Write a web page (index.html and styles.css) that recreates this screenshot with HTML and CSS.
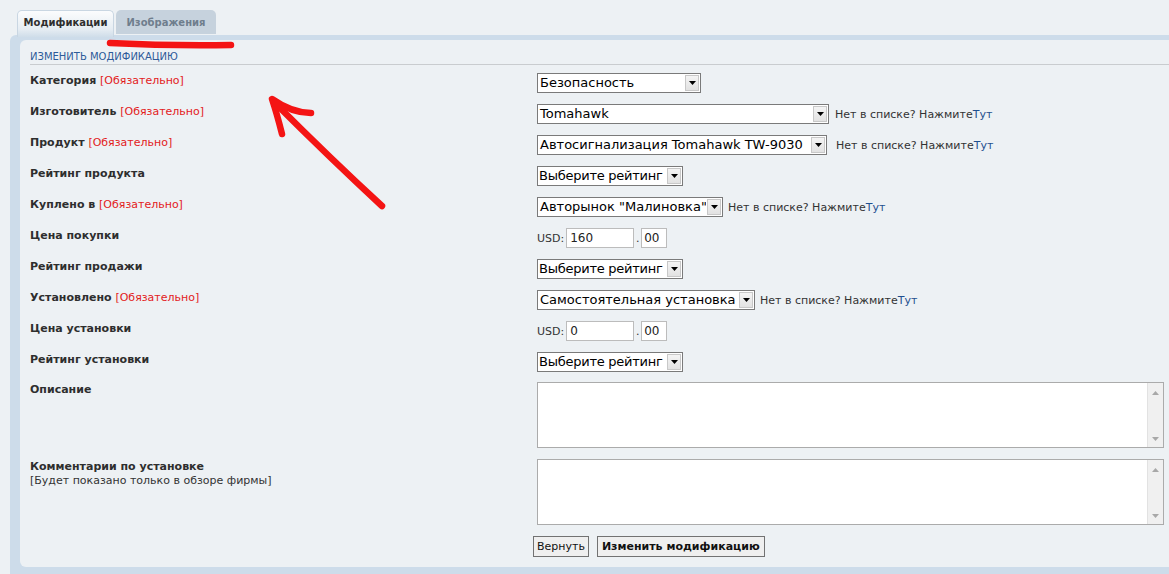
FILE: index.html
```html
<!DOCTYPE html>
<html lang="ru">
<head>
<meta charset="utf-8">
<title>Изменить модификацию</title>
<link rel="stylesheet" href="styles.css">
</head>
<body>
<div class="page">
  <div class="tabs">
    <div class="tab active">Модификации</div>
    <div class="tab">Изображения</div>
  </div>
  <div class="frame">
    <div class="panel">
      <div class="head">ИЗМЕНИТЬ МОДИФИКАЦИЮ</div>

      <div class="row">
        <div class="lbl">Категория <span class="req">[Обязательно]</span></div>
        <div class="ctl">
          <div class="sel w164"><span class="sel-text">Безопасность</span><span class="sel-btn"><svg width="7" height="4" viewBox="0 0 7 4"><path d="M0 0H7L3.5 4Z" fill="#000"/></svg></span></div>
        </div>
      </div>

      <div class="row">
        <div class="lbl">Изготовитель <span class="req">[Обязательно]</span></div>
        <div class="ctl">
          <div class="sel w292"><span class="sel-text">Tomahawk</span><span class="sel-btn"><svg width="7" height="4" viewBox="0 0 7 4"><path d="M0 0H7L3.5 4Z" fill="#000"/></svg></span></div>
          <span class="hint">Нет в списке? Нажмите<a class="link">Тут</a></span>
        </div>
      </div>

      <div class="row">
        <div class="lbl">Продукт <span class="req">[Обязательно]</span></div>
        <div class="ctl gap9">
          <div class="sel w290"><span class="sel-text">Автосигнализация Tomahawk TW-9030</span><span class="sel-btn"><svg width="7" height="4" viewBox="0 0 7 4"><path d="M0 0H7L3.5 4Z" fill="#000"/></svg></span></div>
          <span class="hint">Нет в списке? Нажмите<a class="link">Тут</a></span>
        </div>
      </div>

      <div class="row">
        <div class="lbl">Рейтинг продукта</div>
        <div class="ctl">
          <div class="sel w146"><span class="sel-text">Выберите рейтинг</span><span class="sel-btn"><svg width="7" height="4" viewBox="0 0 7 4"><path d="M0 0H7L3.5 4Z" fill="#000"/></svg></span></div>
        </div>
      </div>

      <div class="row">
        <div class="lbl">Куплено в <span class="req">[Обязательно]</span></div>
        <div class="ctl gap5">
          <div class="sel w186"><span class="sel-text">Авторынок "Малиновка"</span><span class="sel-btn"><svg width="7" height="4" viewBox="0 0 7 4"><path d="M0 0H7L3.5 4Z" fill="#000"/></svg></span></div>
          <span class="hint">Нет в списке? Нажмите<a class="link">Тут</a></span>
        </div>
      </div>

      <div class="row">
        <div class="lbl">Цена покупки</div>
        <div class="ctl gap0">
          <span class="cur">USD:</span><input class="money" type="text" value="160"><span class="dot">.</span><input class="cents" type="text" value="00">
        </div>
      </div>

      <div class="row">
        <div class="lbl">Рейтинг продажи</div>
        <div class="ctl">
          <div class="sel w146"><span class="sel-text">Выберите рейтинг</span><span class="sel-btn"><svg width="7" height="4" viewBox="0 0 7 4"><path d="M0 0H7L3.5 4Z" fill="#000"/></svg></span></div>
        </div>
      </div>

      <div class="row">
        <div class="lbl">Установлено <span class="req">[Обязательно]</span></div>
        <div class="ctl gap5">
          <div class="sel w218"><span class="sel-text">Самостоятельная установка</span><span class="sel-btn"><svg width="7" height="4" viewBox="0 0 7 4"><path d="M0 0H7L3.5 4Z" fill="#000"/></svg></span></div>
          <span class="hint">Нет в списке? Нажмите<a class="link">Тут</a></span>
        </div>
      </div>

      <div class="row">
        <div class="lbl">Цена установки</div>
        <div class="ctl gap0">
          <span class="cur">USD:</span><input class="money" type="text" value="0"><span class="dot">.</span><input class="cents" type="text" value="00">
        </div>
      </div>

      <div class="row tight">
        <div class="lbl">Рейтинг установки</div>
        <div class="ctl">
          <div class="sel w146"><span class="sel-text">Выберите рейтинг</span><span class="sel-btn"><svg width="7" height="4" viewBox="0 0 7 4"><path d="M0 0H7L3.5 4Z" fill="#000"/></svg></span></div>
        </div>
      </div>

      <div class="row">
        <div class="lbl">Описание</div>
        <div class="ctl">
          <div class="ta"><textarea></textarea><div class="sb"><svg width="7" height="4" viewBox="0 0 7 4"><path d="M0 4H7L3.5 0Z" fill="#a8a8a8"/></svg><svg width="7" height="4" viewBox="0 0 7 4"><path d="M0 0H7L3.5 4Z" fill="#a8a8a8"/></svg></div></div>
        </div>
      </div>

      <div class="row">
        <div class="lbl">Комментарии по установке<br><span class="note">[Будет показано только в обзоре фирмы]</span></div>
        <div class="ctl">
          <div class="ta"><textarea></textarea><div class="sb"><svg width="7" height="4" viewBox="0 0 7 4"><path d="M0 4H7L3.5 0Z" fill="#a8a8a8"/></svg><svg width="7" height="4" viewBox="0 0 7 4"><path d="M0 0H7L3.5 4Z" fill="#a8a8a8"/></svg></div></div>
        </div>
      </div>

      <div class="row">
        <div class="lbl"></div>
        <div class="ctl btns">
          <button class="btn" type="button">Вернуть</button>
          <button class="btn bold" type="button">Изменить модификацию</button>
        </div>
      </div>
    </div>
  </div>

  <svg class="marks" width="1169" height="574" viewBox="0 0 1169 574">
    <path d="M110 43 Q170 46 231 45" />
    <path d="M282 134 Q277 114 272 99 Q292 113 311 113" />
    <path d="M275 103 Q330 158 382 206" />
  </svg>
</div>
</body>
</html>
```

FILE: styles.css
```css
html, body {
  margin: 0;
  padding: 0;
}
body {
  background: #edf1f4;
  font-family: "DejaVu Sans", Verdana, sans-serif;
  font-size: 11px;
  color: #333;
}
.page {
  position: relative;
  height: 574px;
  overflow: hidden;
  padding-top: 10px;
  box-sizing: border-box;
}
.tabs {
  display: flex;
  align-items: flex-start;
  gap: 2px;
  padding-left: 17px;
  height: 25px;
}
.tab {
  width: 100px;
  height: 24px;
  line-height: 25px;
  text-align: center;
  font-size: 10px;
  font-weight: bold;
  color: #6f7e8d;
  background: #c6d2dd;
  border-radius: 5px 5px 0 0;
  box-sizing: border-box;
}
.tab.active {
  width: 97px;
  height: 27px;
  line-height: 24px;
  color: #2e2e2e;
  background: linear-gradient(#fbfcfd, #e6edf3 70%, #cfdde9);
  border: 1px solid #c9d6e2;
  border-bottom: 0;
  position: relative;
  z-index: 1;
}
.frame {
  margin-left: 10px;
  background: #cddcea;
  padding: 5px 0 10px 10px;
  border-top-left-radius: 6px;
}
.panel {
  background: #edf1f4;
  border-radius: 6px 0 0 6px;
  padding: 10px 0 10px 10px;
  height: 527px;
  box-sizing: border-box;
}
.head {
  color: #2d5b99;
  font-size: 10px;
  line-height: 14px;
  padding-bottom: 0;
  border-bottom: 1px solid #c9cccf;
  margin-bottom: 8px;
}
.row {
  display: grid;
  grid-template-columns: 507px 1fr;
  align-items: start;
  margin-bottom: 11px;
}
.row.tight {
  margin-bottom: 10px;
}
.lbl {
  font-weight: bold;
  color: #2e2e2e;
  line-height: 14px;
  padding-top: 1px;
}
.req {
  font-weight: normal;
  color: #e3201b;
}
.note {
  font-weight: normal;
  color: #333;
}
.ctl {
  display: flex;
  align-items: center;
  gap: 6px;
  min-height: 20px;
}
.ctl.gap9 { gap: 9px; }
.ctl.gap5 { gap: 5px; }
.ctl.gap0 { gap: 0; }
.sel {
  display: flex;
  align-items: stretch;
  height: 20px;
  box-sizing: border-box;
  border: 1px solid #7a7a7a;
  background: #fff;
  font-size: 13px;
  color: #000;
}
.w164 { width: 164px; }
.w292 { width: 292px; }
.w290 { width: 290px; }
.w146 { width: 146px; }
.w186 { width: 186px; }
.w218 { width: 218px; }
.sel-text {
  flex: 1;
  padding-left: 2px;
  line-height: 18px;
  white-space: nowrap;
  overflow: hidden;
}
.w146 .sel-text {
  letter-spacing: -0.25px;
  padding-left: 1px;
}
.sel-btn {
  width: 14px;
  margin: 1px;
  background: linear-gradient(#f4f4f4, #e2e2e2);
  border: 1px solid #c8c8c8;
  box-sizing: border-box;
  display: flex;
  align-items: center;
  justify-content: center;
}
.hint {
  font-size: 11px;
  color: #333;
  white-space: nowrap;
}
.link {
  color: #1f4f8f;
}
.cur {
  font-size: 11px;
  color: #333;
  margin-right: 2px;
}
.money, .cents {
  height: 20px;
  box-sizing: border-box;
  border: 1px solid #bcbcbc;
  background: #fff;
  font-family: "DejaVu Sans", Verdana, sans-serif;
  font-size: 12px;
  color: #222;
  padding: 0 3px;
  margin: 0;
  outline: none;
}
.money { width: 68px; }
.cents { width: 26px; padding: 0 2px; }
.dot {
  width: 7px;
  text-align: center;
  font-size: 11px;
}
.ta {
  display: flex;
  width: 627px;
  height: 66px;
  box-sizing: border-box;
  border: 1px solid #ababab;
  background: #fff;
}
.ta textarea {
  flex: 1;
  border: 0;
  margin: 0;
  padding: 2px;
  resize: none;
  outline: none;
  overflow: hidden;
  background: #fff;
}
.sb {
  width: 16px;
  background: #f0f0f0;
  border-left: 1px solid #e2e2e2;
  display: flex;
  flex-direction: column;
  justify-content: space-between;
  align-items: center;
  padding: 8px 0 6px;
  box-sizing: border-box;
}
.btns {
  margin-left: -4px;
  gap: 8px;
}
.btn {
  height: 21px;
  box-sizing: border-box;
  border: 1px solid #727272;
  background: #efefef;
  font-family: "DejaVu Sans", Verdana, sans-serif;
  font-size: 11px;
  color: #111;
  padding: 0 3px;
  margin: 0;
  border-radius: 0;
}
.btn.bold {
  font-weight: bold;
  padding: 0 4px;
}
.marks {
  position: absolute;
  left: 0;
  top: 0;
  pointer-events: none;
  z-index: 5;
}
.marks path {
  fill: none;
  stroke: #f41414;
  stroke-width: 6.5;
  stroke-linecap: round;
  stroke-linejoin: round;
}
```
